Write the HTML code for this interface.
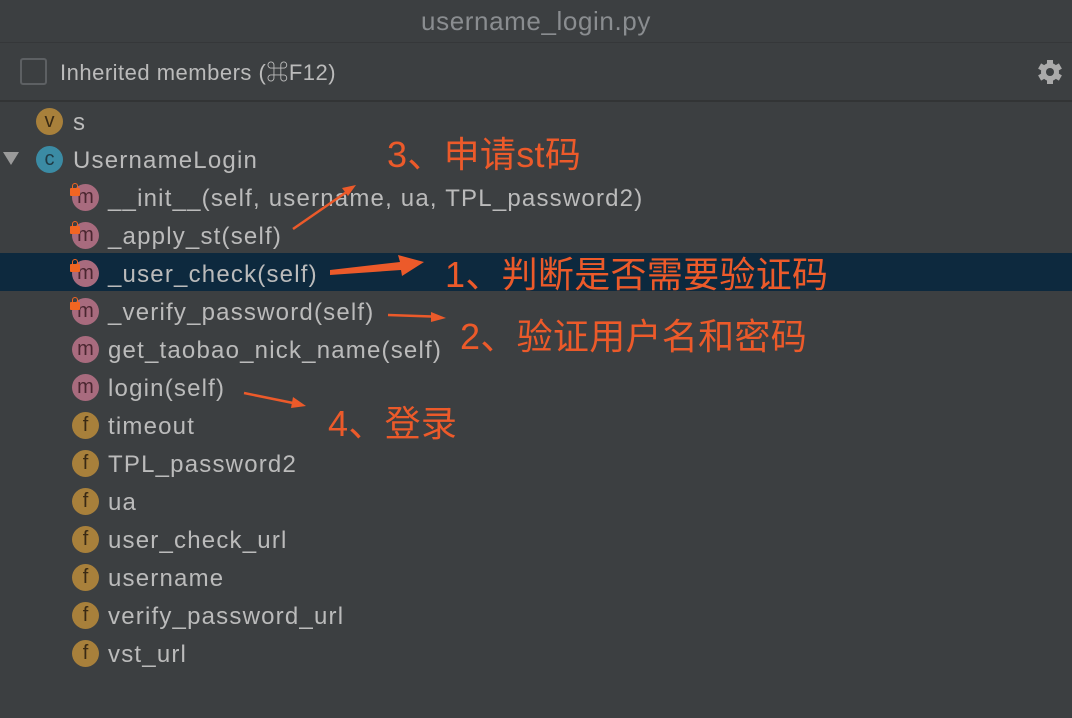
<!DOCTYPE html>
<html><head><meta charset="utf-8"><style>
body{margin:0;width:1072px;height:718px;background:#3c3f41;position:relative;overflow:hidden;font-family:"Liberation Sans","Noto Sans CJK SC",sans-serif}
.title{position:absolute;left:0;top:0;width:1072px;height:42px;background:#3c3f41;color:#8a8d90;font-size:26px;letter-spacing:0.6px;text-align:center;line-height:42px}
.hdr{position:absolute;left:0;top:42px;width:1072px;height:58px;background:#3c3f41;border-top:1px solid #353739}
.sep{position:absolute;left:0;top:100px;width:1072px;height:2px;background:#323435}
.cb{position:absolute;left:20px;top:58px;width:27px;height:27px;border:2px solid #5d6063;border-radius:3px;box-sizing:border-box;background:#3c3f41}
.hl{position:absolute;left:60px;top:59px;color:#bbbbbb;font-size:22px;letter-spacing:0.5px;line-height:28px}
.sel{position:absolute;left:0;top:253px;width:1072px;height:38px;background:#0d293e}
.row{position:absolute;height:38px;line-height:38px;color:#bbbbbb;font-size:24px;letter-spacing:1.2px;white-space:nowrap;margin-top:2px}
.ic{position:absolute;width:27px;height:27px;border-radius:50%;text-align:center;line-height:27px;font-size:20px;color:#3a2a14}
.v,.f{background:#a8803b}
.c{background:#3b8ba4;color:#1f3a45}
.m{background:#a86b7e;color:#4a2630}
.lock{position:absolute;width:10px;height:8px;background:#f26522;border-radius:1px}
.lock:before{content:"";position:absolute;left:2px;top:-5px;width:4px;height:5px;border:1px solid #f26522;border-bottom:none;border-radius:3px 3px 0 0}
.ann{position:absolute;color:#ec5a2a;font-size:36px;letter-spacing:0.3px;white-space:nowrap}
</style></head><body>
<div class="title">username_login.py</div>
<div class="hdr"></div>
<div class="cb"></div>
<div class="hl">Inherited members (⌘F12)</div>
<svg style="position:absolute;left:1036px;top:58px" width="28" height="28" viewBox="0 0 28 28"><g fill="#aaaaaa"><circle cx="14" cy="14" r="9"/><rect x="11" y="2" width="6" height="24"/><rect x="11" y="2" width="6" height="24" transform="rotate(60 14 14)"/><rect x="11" y="2" width="6" height="24" transform="rotate(120 14 14)"/></g><circle cx="14" cy="14" r="4" fill="#3c3f41"/></svg>
<div class="sep"></div>
<div class="sel"></div>
<svg style="position:absolute;left:3px;top:152px" width="16" height="14"><polygon points="0,0 16,0 8,13" fill="#9a9a9a"/></svg>

<div class="ic v" style="left:36px;top:108px">v</div><div class="row" style="left:73px;top:102px">s</div>
<div class="ic c" style="left:36px;top:146px">c</div><div class="row" style="left:73px;top:140px">UsernameLogin</div>

<div class="ic m" style="left:72px;top:184px">m</div><div class="lock" style="left:70px;top:188px"></div><div class="row" style="left:108px;top:178px">__init__(self, username, ua, TPL_password2)</div>
<div class="ic m" style="left:72px;top:222px">m</div><div class="lock" style="left:70px;top:226px"></div><div class="row" style="left:108px;top:216px">_apply_st(self)</div>
<div class="ic m" style="left:72px;top:260px">m</div><div class="lock" style="left:70px;top:264px"></div><div class="row" style="left:108px;top:254px">_user_check(self)</div>
<div class="ic m" style="left:72px;top:298px">m</div><div class="lock" style="left:70px;top:302px"></div><div class="row" style="left:108px;top:292px">_verify_password(self)</div>
<div class="ic m" style="left:72px;top:336px">m</div><div class="row" style="left:108px;top:330px">get_taobao_nick_name(self)</div>
<div class="ic m" style="left:72px;top:374px">m</div><div class="row" style="left:108px;top:368px">login(self)</div>
<div class="ic f" style="left:72px;top:412px">f</div><div class="row" style="left:108px;top:406px">timeout</div>
<div class="ic f" style="left:72px;top:450px">f</div><div class="row" style="left:108px;top:444px">TPL_password2</div>
<div class="ic f" style="left:72px;top:488px">f</div><div class="row" style="left:108px;top:482px">ua</div>
<div class="ic f" style="left:72px;top:526px">f</div><div class="row" style="left:108px;top:520px">user_check_url</div>
<div class="ic f" style="left:72px;top:564px">f</div><div class="row" style="left:108px;top:558px">username</div>
<div class="ic f" style="left:72px;top:602px">f</div><div class="row" style="left:108px;top:596px">verify_password_url</div>
<div class="ic f" style="left:72px;top:640px">f</div><div class="row" style="left:108px;top:634px">vst_url</div>

<svg style="position:absolute;left:0;top:0" width="1072" height="718">
<g fill="#ec5a2a" stroke="#ec5a2a">
<line x1="293" y1="229" x2="348" y2="191" stroke-width="2.5"/><polygon points="356,185 342,188 348,196" stroke="none"/>
<polygon points="330,275 330,270 400,262 398,255 424,262 402,276 401,270" stroke="none"/>
<line x1="388" y1="315" x2="432" y2="316.5" stroke-width="2.5"/><polygon points="446,318 431,312 431,322" stroke="none"/>
<line x1="244" y1="393" x2="293" y2="403" stroke-width="2.5"/><polygon points="306,406 293,397 291,408" stroke="none"/>
</g></svg>
<div class="ann" style="left:387px;top:126px">3、申请st码</div>
<div class="ann" style="left:445px;top:246px">1、判断是否需要验证码</div>
<div class="ann" style="left:460px;top:308px">2、验证用户名和密码</div>
<div class="ann" style="left:328px;top:395px">4、登录</div>
</body></html>
